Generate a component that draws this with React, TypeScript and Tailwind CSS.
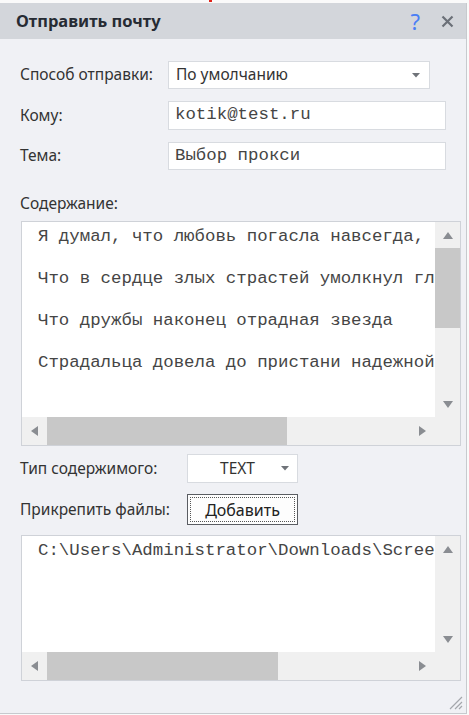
import React from "react";

const ui = { fontFamily: '"Noto Sans", "Open Sans", Arial, sans-serif' };
const mono = { fontFamily: '"Liberation Mono", "Courier New", monospace' };

function Caret() {
  return (
    <svg width="8" height="5" viewBox="0 0 8 5">
      <path d="M0 0 L8 0 L4 4.5 Z" fill="#6f7379" />
    </svg>
  );
}

function Tri({ dir }: { dir: "up" | "down" | "left" | "right" }) {
  const d =
    dir === "up"
      ? "M0 7 L10 7 L5 0 Z"
      : dir === "down"
      ? "M0 0 L10 0 L5 7 Z"
      : dir === "left"
      ? "M7 0 L7 10 L0 5 Z"
      : "M0 0 L0 10 L7 5 Z";
  const w = dir === "up" || dir === "down" ? 10 : 7;
  const h = dir === "up" || dir === "down" ? 7 : 10;
  return (
    <svg width={w} height={h} viewBox={`0 0 ${w} ${h}`}>
      <path d={d} fill="#8a8d92" />
    </svg>
  );
}

function ScrollBox({
  height,
  lines,
  vThumb,
  hThumbW,
}: {
  height: string;
  lines: string[];
  vThumb: boolean;
  hThumbW: string;
}) {
  return (
    <div className={`ml-[1px] w-[440px] ${height} border border-[#cfd2d8] bg-white flex flex-col`}>
      <div className="flex flex-1 min-h-0">
        <div
          className="flex-1 overflow-hidden pl-[16px] pt-[4px] text-[17.4px] leading-[21px] text-[#454545] whitespace-pre"
          style={mono}
        >
          {lines.map((l, i) => (
            <div key={i} className="h-[21px]">
              {l}
            </div>
          ))}
        </div>
        <div className="w-[25px] bg-[#f0f0f0] flex flex-col">
          <div className="h-[26px] flex items-center justify-center">
            <Tri dir="up" />
          </div>
          {vThumb ? <div className="h-[80px] bg-[#c8c8c8]" /> : null}
          <div className="flex-1" />
          <div className="h-[26px] flex items-center justify-center">
            <Tri dir="down" />
          </div>
        </div>
      </div>
      <div className="h-[28px] flex bg-[#f0f0f0]">
        <div className="w-[25px] flex items-center justify-center">
          <Tri dir="left" />
        </div>
        <div className={`${hThumbW} bg-[#c8c8c8]`} />
        <div className="flex-1" />
        <div className="w-[26px] flex items-center justify-center">
          <Tri dir="right" />
        </div>
        <div className="w-[25px] bg-[#f0f0f0]" />
      </div>
    </div>
  );
}

export default function App() {
  return (
    <div className="w-[469px] h-[715px] bg-[#fafafa] relative overflow-hidden" style={ui}>
      <div className="h-[3px] relative">
        <div className="absolute left-[209px] top-0 w-[3px] h-[2px] bg-[#e2231a]" />
      </div>
      <div className="w-[467px] h-[711px] border-r border-b border-[#c7cace] flex flex-col">
        <div className="h-[36px] bg-[#d3d6db] flex items-center pl-[16px] pr-[12px]">
          <div className="text-[16.5px] font-bold text-[#262b33] flex-1">Отправить почту</div>
          <div className="text-[22px] leading-none text-[#4a7ef5] mr-[21px]">?</div>
          <svg width="13" height="13" viewBox="0 0 13 13">
            <path d="M1.5 1.5 L11.5 11.5 M11.5 1.5 L1.5 11.5" stroke="#6b7078" strokeWidth="2.2" />
          </svg>
        </div>
        <div className="flex-1 bg-[#f0f1f5] pl-[20px] pt-[22px] relative">
          <div className="flex items-center h-[28px]">
            <div className="w-[148px] text-[15.5px] text-[#333]">Способ отправки:</div>
            <div className="w-[262px] h-[28px] bg-white border border-[#d8dbe0] flex items-center pl-[7px] pr-[9px]">
              <span className="flex-1 text-[15.5px] text-[#333]">По умолчанию</span>
              <Caret />
            </div>
          </div>
          <div className="flex items-center h-[29px] mt-[12px]">
            <div className="w-[148px] text-[15.5px] text-[#333]">Кому:</div>
            <div className="w-[278px] h-[29px] bg-white border border-[#d8dbe0] flex items-center pl-[6px]">
              <span className="text-[17.4px] text-[#454545]" style={mono}>kotik@test.ru</span>
            </div>
          </div>
          <div className="flex items-center h-[28px] mt-[12px]">
            <div className="w-[148px] text-[15.5px] text-[#333]">Тема:</div>
            <div className="w-[278px] h-[28px] bg-white border border-[#d8dbe0] flex items-center pl-[6px]">
              <span className="text-[17.4px] text-[#454545]" style={mono}>Выбор прокси</span>
            </div>
          </div>
          <div className="mt-[24px] h-[18px] leading-[18px] text-[15.5px] text-[#333]">Содержание:</div>
          <div className="mt-[9px]">
            <ScrollBox
              height="h-[225px]"
              lines={[
                "Я думал, что любовь погасла навсегда,",
                "",
                "Что в сердце злых страстей умолкнул глас мятежный,",
                "",
                "Что дружбы наконец отрадная звезда",
                "",
                "Страдальца довела до пристани надежной",
              ]}
              vThumb={true}
              hThumbW="w-[240px]"
            />
          </div>
          <div className="flex items-center h-[29px] mt-[8px]">
            <div className="w-[167px] text-[15.5px] text-[#333]">Тип содержимого:</div>
            <div className="w-[111px] h-[29px] bg-white border border-[#d8dbe0] flex items-center pr-[8px]">
              <span className="flex-1 text-center text-[15.5px] text-[#333] pl-[6px]">TEXT</span>
              <Caret />
            </div>
          </div>
          <div className="flex items-center h-[31px] mt-[11px]">
            <div className="w-[167px] text-[15.5px] text-[#333]">Прикрепить файлы:</div>
            <div className="w-[111px] h-[31px] bg-[#fdfdfd] border border-[#5a5d62] p-[2px]">
              <div className="w-full h-full border border-dotted border-[#555] flex items-center justify-center text-[16px] text-[#222]">
                Добавить
              </div>
            </div>
          </div>
          <div className="mt-[10px]">
            <ScrollBox
              height="h-[146px]"
              lines={["C:\\Users\\Administrator\\Downloads\\Screenshot.png"]}
              vThumb={false}
              hThumbW="w-[231px]"
            />
          </div>
          <svg className="absolute right-[3px] bottom-[3px]" width="16" height="16" viewBox="0 0 16 16">
            <path d="M15 3 L3 15 M15 8 L8 15 M15 12 L12 15" stroke="#a4a7ac" strokeWidth="1.2" />
          </svg>
        </div>
      </div>
    </div>
  );
}
